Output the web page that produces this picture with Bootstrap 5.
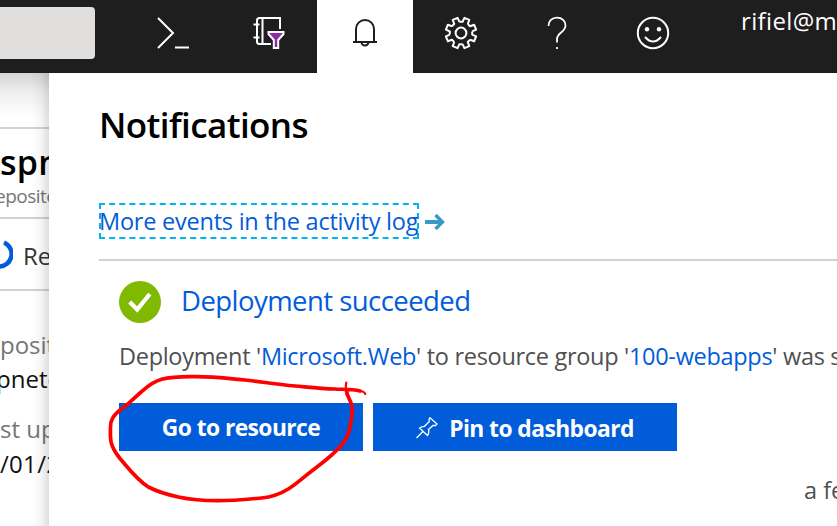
<!DOCTYPE html>
<html lang="en">
<head>
<meta charset="utf-8">
<title>Notifications</title>
<link href="https://cdn.jsdelivr.net/npm/bootstrap@5.3.0/dist/css/bootstrap.min.css" rel="stylesheet">
<style>
body{width:837px;height:526px;font-family:"Open Sans","Noto Sans",sans-serif;background:#fff;color:#505050}
.topbar{height:73px;background:#1e1e1e}
.searchbox{width:95px;height:52px;margin:7px 30px 0 0;background:#e1dfdd;border-radius:0 4px 4px 0}
.tool{width:96px;height:73px}
.tool svg{display:block;width:96px;height:73px;fill:none;stroke:#fff;stroke-width:2}
.tool.active{background:#fff}
.tool.active svg{stroke:#1e1e1e}
.account{padding-left:40px;font-size:24px;line-height:42px;letter-spacing:.35px;color:#fff}
.blade{width:49px;white-space:nowrap}
.blade::after{content:"";position:absolute;inset:0;background:linear-gradient(to left,rgba(0,0,0,.13),rgba(0,0,0,.04) 8px,transparent 18px),linear-gradient(rgba(0,0,0,.17),rgba(0,0,0,.06) 20px,transparent 45px)}
.rule{border-bottom:2px solid #d2d2d2}
.cmd{height:56px}
.head{height:90px;padding-top:11px}
.head .title{font-size:34px;line-height:44px;font-weight:600;letter-spacing:.3px;color:#000}
.head .sub{font-size:19px;line-height:25px;color:#767676;margin-left:-5px;letter-spacing:-.5px}
.status{height:72px}
.status svg{width:13px;height:72px;display:block}
.status span{margin-left:10px;font-size:24px;line-height:73px;color:#333}
.facts{padding-top:37px;font-size:24px;line-height:33px}
.facts .lbl{color:#767676}.facts .val{color:#111}
.facts .val:nth-child(2){margin-left:-4px;line-height:35px}
.facts .lbl:nth-child(3){margin-top:16px}
.facts .val:last-child{line-height:37px;letter-spacing:.3px}
.panel{padding:32px 0 0 50px;white-space:nowrap}
.panel h1{font-size:35px;font-weight:600;line-height:40px;letter-spacing:-.6px;color:#000;margin:0}
.logrow{margin-top:58px;height:36px}
.loglink{width:320px;height:36px;border:2px dashed #00b4ef;font-size:23.5px;line-height:32px;color:#015cda;letter-spacing:-.23px;text-indent:-2px;margin-right:6px}
.sep{margin-top:20px}
.note{padding-left:20px}
.note .state{height:42px;margin-top:20px}
.note h2{font-size:27.5px;line-height:40px;font-weight:400;letter-spacing:-.55px;color:#015cda;margin:0 0 0 20px}
.note .msg{font-size:23.5px;line-height:34px;letter-spacing:-.3px;margin-top:16px}
.note .msg a,.loglink{text-decoration:none}
.note .msg a{color:#015cda}
.actions{margin-top:30px;gap:10px}
.actions .btn{height:48px;background:#015cda;border:0;color:#fff;font-size:22.8px;font-weight:700;line-height:46px;padding:2px 0 0;letter-spacing:-.57px}
.go{width:244px}.pin{width:304px}
.pin svg{margin:12px 11px 0 0}
.actions .pin{line-height:48px}
.ago{margin:21px 0 0 685px;font-size:23.5px;line-height:36px}
.ink{left:0;top:0;z-index:5;pointer-events:none}
</style>
<script src="https://cdn.jsdelivr.net/npm/bootstrap@5.3.0/dist/js/bootstrap.bundle.min.js"></script>
</head>
<body class="position-relative overflow-hidden">
<header class="topbar d-flex overflow-hidden">
  <div class="searchbox flex-shrink-0"></div>
  <div class="tool flex-shrink-0"><svg viewBox="0 0 96 73"><path d="M33 18 48 33 33 48M50 47.500H64"/></svg></div>
  <div class="tool flex-shrink-0"><svg viewBox="0 0 96 73"><path d="M59 29V18H38.500Q36 18 36 20.500V41.500Q36 44 38.500 44H50M41.500 18V44M32.500 24.500H38.500M32.500 37.500H38.500"/><path d="M47.500 32H62.500V34L57.200 40V48H52.800V40L47.500 34Z" fill="#8a2da5"/></svg></div>
  <div class="tool active flex-shrink-0"><svg viewBox="0 0 96 73"><path d="M39 42V29A9 9 0 0 1 57 29V42M36 42H60M44.500 42A3.500 3.500 0 0 0 51.500 42"/></svg></div>
  <div class="tool flex-shrink-0"><svg viewBox="0 0 96 73"><defs><path id="tooth" d="M-1.600-11.200H1.600L3.400-15.100 8.300-13.100 6.800-9"/></defs><g transform="translate(48 33)" stroke-width="2" stroke-linejoin="round"><circle r="5.400"/><use href="#tooth"/><use href="#tooth" transform="rotate(45)"/><use href="#tooth" transform="rotate(90)"/><use href="#tooth" transform="rotate(135)"/><use href="#tooth" transform="rotate(180)"/><use href="#tooth" transform="rotate(225)"/><use href="#tooth" transform="rotate(270)"/><use href="#tooth" transform="rotate(315)"/></g></svg></div>
  <div class="tool flex-shrink-0"><svg viewBox="0 0 96 73"><path stroke-width="1.800" d="M39.500 26C39.500 21 43 17.700 48 17.700S56.500 21 56.500 25.500C56.500 32 48 33 48 39V42.500M48 47V49"/></svg></div>
  <div class="tool flex-shrink-0"><svg viewBox="0 0 96 73"><circle cx="48" cy="33" r="15.200"/><path d="M40 37Q48 46 56 37"/><g fill="#fff" stroke="none"><circle cx="42" cy="29.200" r="2.200"/><circle cx="54" cy="29.200" r="2.200"/></g></svg></div>
  <div class="account">rifiel@m</div>
</header>
<main class="d-flex" style="height:453px">
  <aside class="blade position-relative overflow-hidden flex-shrink-0">
    <div class="cmd rule"></div>
    <div class="head rule"><div class="title">spn</div><div class="sub">eposito</div></div>
    <div class="status rule d-flex"><svg viewBox="0 0 13 72" class="flex-shrink-0"><path d="M4 23.500A12.500 12.500 0 0 1-1 47.500" fill="none" stroke="#015cda" stroke-width="4.500"/></svg><span>Re</span></div>
    <div class="facts"><div class="lbl">posit</div><div class="val">pnetc</div><div class="lbl">st up</div><div class="val">/01/2</div></div>
  </aside>
  <section class="panel flex-grow-1 overflow-hidden">
    <h1>Notifications</h1>
    <div class="logrow d-flex align-items-center"><a class="loglink" href="#">More events in the activity log</a><svg width="20" height="18" viewBox="0 0 20 18" fill="none" stroke="#3999c6"><path stroke-width="4" d="M0 10H18"/><path stroke-width="3.400" d="M10.500 3 17.500 10 10.500 17"/></svg></div>
    <div class="sep rule"></div>
    <div class="note">
      <div class="state d-flex"><svg width="42" height="42" viewBox="0 0 42 42"><circle cx="21" cy="21" r="21" fill="#7fba00"/><path d="M10.700 21 18.200 28.500 30.800 13" fill="none" stroke="#fff" stroke-width="4.300"/></svg><h2>Deployment succeeded</h2></div>
      <div class="msg">Deployment '<a href="#">Microsoft.Web</a>' to resource group '<a href="#">100-webapps</a>' was s</div>
      <div class="actions d-flex">
        <button class="btn rounded-0 go">Go to resource</button>
        <button class="btn rounded-0 pin d-flex justify-content-center"><svg width="22" height="22" viewBox="0 0 22 22" fill="none" stroke="#fff" stroke-width="1.300"><path d="M.5 21 7 14.500M3.500 11 11.500 18.500Q13.500 15.500 12.500 12.500L17 8.500 19.500 8.500 21 7 14 .8 13 2.500 13.300 4.500 8.500 9.300Q5.500 9.300 3.500 11Z"/></svg>Pin to dashboard</button>
      </div>
      <div class="ago">a fe</div>
    </div>
  </section>
</main>
<svg class="ink position-absolute" width="837" height="526" viewBox="0 0 837 526" fill="none" stroke="#f00" stroke-linecap="round" stroke-linejoin="round"><path stroke-width="3.700" d="M360 391C352 389 342 389.500 335 389 320 388.500 307 387 295 386 278 384.500 262 382 245 380 228 378.500 211 376.500 195 376.700 182 376.500 172 376.500 161.700 379.300 152 382 147 387 141.700 391.500 134 398 128 405 120 410 113 416 110.500 420 110.500 427 110 440 110 446 120 458.500 129 469 136 479 148.300 487 157 491.500 167 494.500 178.300 497 192 500 205 500.700 218.300 500.700 234 500.700 250 499 261.700 498 272 497 281 493.500 288.300 489 298 483 306 475 315 468.500 325 461 334 454 341.700 445 348 437 350 430 351 421.700 352.500 413 352.500 409 351.700 405 350 399 347 396 346.500 391"/><path stroke-width="2.200" d="M358 390.500Q364 391 365.300 394M347 395Q345 390 346.300 382.500"/></svg>
</body>
</html>
